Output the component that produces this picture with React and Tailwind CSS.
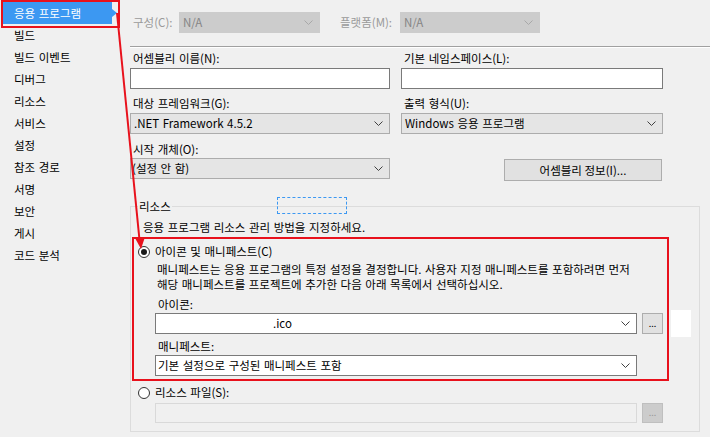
import React from 'react';

const sideItems = ['응용 프로그램', '빌드', '빌드 이벤트', '디버그', '리소스', '서비스', '설정', '참조 경로', '서명', '보안', '게시', '코드 분석'];

const Chevron = ({ color = '#404040' }) => (
    <svg width="9" height="5" viewBox="0 0 9 5" className="shrink-0">
        <polyline points="0.5,0.5 4.5,4.5 8.5,0.5" fill="none" stroke={color} strokeWidth="1" />
    </svg>
);

const Radio = ({ checked }) => (
    <span className="w-[12px] h-[12px] rounded-full border border-[#333] bg-white flex items-center justify-center shrink-0">
        {checked && <span className="w-[6px] h-[6px] rounded-full bg-[#1a1a1a]" />}
    </span>
);

const Label = ({ children, className = '' }) => (
    <div className={`h-[16px] leading-[16px] pl-[3px] ${className}`}>{children}</div>
);

const App = () => {
    return (
        <div className="relative w-[710px] h-[437px] overflow-hidden bg-[#f0f0f0] text-[11.5px] [word-spacing:1px] text-black font-['Noto_Sans_CJK_KR',sans-serif] flex">
            {/* Sidebar */}
            <div className="w-[130px] shrink-0 pt-[2px] pl-[3px]">
                {sideItems.map((item, i) => (
                    <div
                        key={item}
                        className={
                            i === 0
                                ? 'relative h-[22px] leading-[22px] pl-[11px] w-[109px] bg-[#3c98f2] text-white'
                                : 'h-[22px] leading-[22px] pl-[11px]'
                        }
                    >
                        {item}
                        {i === 0 && (
                            <span className="absolute left-full top-[7px] border-y-[4px] border-y-transparent border-l-[5px] border-l-[#3c98f2]" />
                        )}
                    </div>
                ))}
            </div>

            {/* Content */}
            <div className="flex-1 pt-[12px]">
                <div className="flex items-center h-[21px]">
                    <span className="w-[49px] pl-[3px] text-[#9a9a9a]">구성(C):</span>
                    <div className="w-[141px] h-[21px] bg-[#cccccc] border border-[#cccccc] flex items-center justify-between pl-[3px] pr-[6px] text-[#858585]">
                        N/A <Chevron color="#a8a8a8" />
                    </div>
                    <span className="ml-[20px] w-[60px] text-[#9a9a9a]">플랫폼(M):</span>
                    <div className="w-[140px] h-[21px] bg-[#cccccc] border border-[#cccccc] flex items-center justify-between pl-[3px] pr-[6px] text-[#858585]">
                        N/A <Chevron color="#a8a8a8" />
                    </div>
                </div>

                <div className="mt-[13px] border-t border-t-[#a0a0a0] border-b border-b-white" />

                <div className="grid grid-cols-[260px_262px] gap-x-[11px]">
                    <div>
                        <Label className="mt-[2px] mb-[2px]">어셈블리 이름(N):</Label>
                        <div className="h-[21px] bg-white border border-[#7a7a7a]" />
                    </div>
                    <div>
                        <Label className="mt-[2px] mb-[2px]">기본 네임스페이스(L):</Label>
                        <div className="h-[21px] bg-white border border-[#7a7a7a]" />
                    </div>
                    <div>
                        <Label className="mt-[6px] mb-[2px]">대상 프레임워크(G):</Label>
                        <div className="h-[21px] bg-[#e5e5e5] border border-[#acacac] flex items-center justify-between pl-[3px] pr-[6px]">
                            .NET Framework 4.5.2 <Chevron />
                        </div>
                    </div>
                    <div>
                        <Label className="mt-[6px] mb-[2px]">출력 형식(U):</Label>
                        <div className="h-[21px] bg-[#e5e5e5] border border-[#acacac] flex items-center justify-between pl-[3px] pr-[6px]">
                            Windows 응용 프로그램 <Chevron />
                        </div>
                    </div>
                    <div>
                        <Label className="mt-[7px] mb-[1px]">시작 개체(O):</Label>
                        <div className="h-[21px] bg-[#e5e5e5] border border-[#acacac] flex items-center justify-between pl-[1px] pr-[6px]">
                            (설정 안 함) <Chevron />
                        </div>
                    </div>
                    <div className="flex justify-end items-start pt-[25px]">
                        <button className="w-[158px] h-[22px] mr-[1px] bg-[#e1e1e1] border border-[#adadad] leading-[20px]">
                            어셈블리 정보(I)...
                        </button>
                    </div>
                </div>

                {/* Resources group */}
                <div className="relative mt-[25px] w-[570px] h-[226px] border border-[#dcdcdc]">
                    <span className="absolute -top-[9px] left-[7px] px-[1px] bg-[#f0f0f0] leading-[16px]">리소스</span>
                    <div className="pt-[12px] pl-[12px] h-[16px] leading-[16px] box-content">
                        응용 프로그램 리소스 관리 방법을 지정하세요.
                    </div>

                    <div className="mt-[2px] ml-[1px] w-[537px] h-[144px] border-2 border-[#e8111c] pt-[5px]">
                        <div className="flex items-center h-[16px] pl-[4px] gap-[5px]">
                            <Radio checked />
                            <span>아이콘 및 매니페스트(C)</span>
                        </div>
                        <div className="mt-[2px] pl-[23px] leading-[15px]">
                            <div>매니페스트는 응용 프로그램의 특정 설정을 결정합니다. 사용자 지정 매니페스트를 포함하려면 먼저</div>
                            <div>해당 매니페스트를 프로젝트에 추가한 다음 아래 목록에서 선택하십시오.</div>
                        </div>
                        <div className="pl-[21px]">
                            <Label className="mt-[4px] mb-[1px]">아이콘:</Label>
                            <div className="flex gap-[5px]">
                                <div className="w-[482px] h-[21px] bg-white border border-[#7a7a7a] flex items-center justify-between pl-[117px] pr-[6px]">
                                    .ico <Chevron />
                                </div>
                                <button className="w-[21px] h-[21px] bg-[#e1e1e1] border border-[#adadad] text-[9px] leading-[14px]">...</button>
                            </div>
                            <Label className="mt-[4px] mb-[1px]">매니페스트:</Label>
                            <div className="w-[482px] h-[21px] bg-white border border-[#7a7a7a] flex items-center justify-between pl-[2px] pr-[6px]">
                                기본 설정으로 구성된 매니페스트 포함 <Chevron />
                            </div>
                        </div>
                    </div>

                    <div className="mt-[4px] flex items-center h-[16px] pl-[7px] gap-[5px]">
                        <Radio />
                        <span>리소스 파일(S):</span>
                    </div>
                    <div className="mt-[2px] pl-[24px] flex gap-[5px]">
                        <div className="w-[482px] h-[20px] bg-[#f0f0f0] border border-[#d9d9d9]" />
                        <button className="w-[21px] h-[20px] bg-[#cccccc] border border-[#bfbfbf] text-[9px] text-[#999] leading-[12px]">...</button>
                    </div>
                </div>
            </div>

            {/* Overlays */}
            <div className="absolute left-[277px] top-[197px] w-[70px] h-[17px] border border-dashed border-[#3c98f2]" />
            <div className="absolute left-[671px] top-[310px] w-[20px] h-[27px] bg-white" />
            <div className="absolute left-[1px] top-0 w-[119px] h-[28px] border-2 border-[#e8111c]" />
            <svg className="absolute inset-0 pointer-events-none" width="710" height="437">
                <line x1="117" y1="13" x2="139.5" y2="240" stroke="#e8111c" strokeWidth="2" />
                <polygon points="135,238 145,237 141,249" fill="#e8111c" />
            </svg>
        </div>
    );
};

export default App;
